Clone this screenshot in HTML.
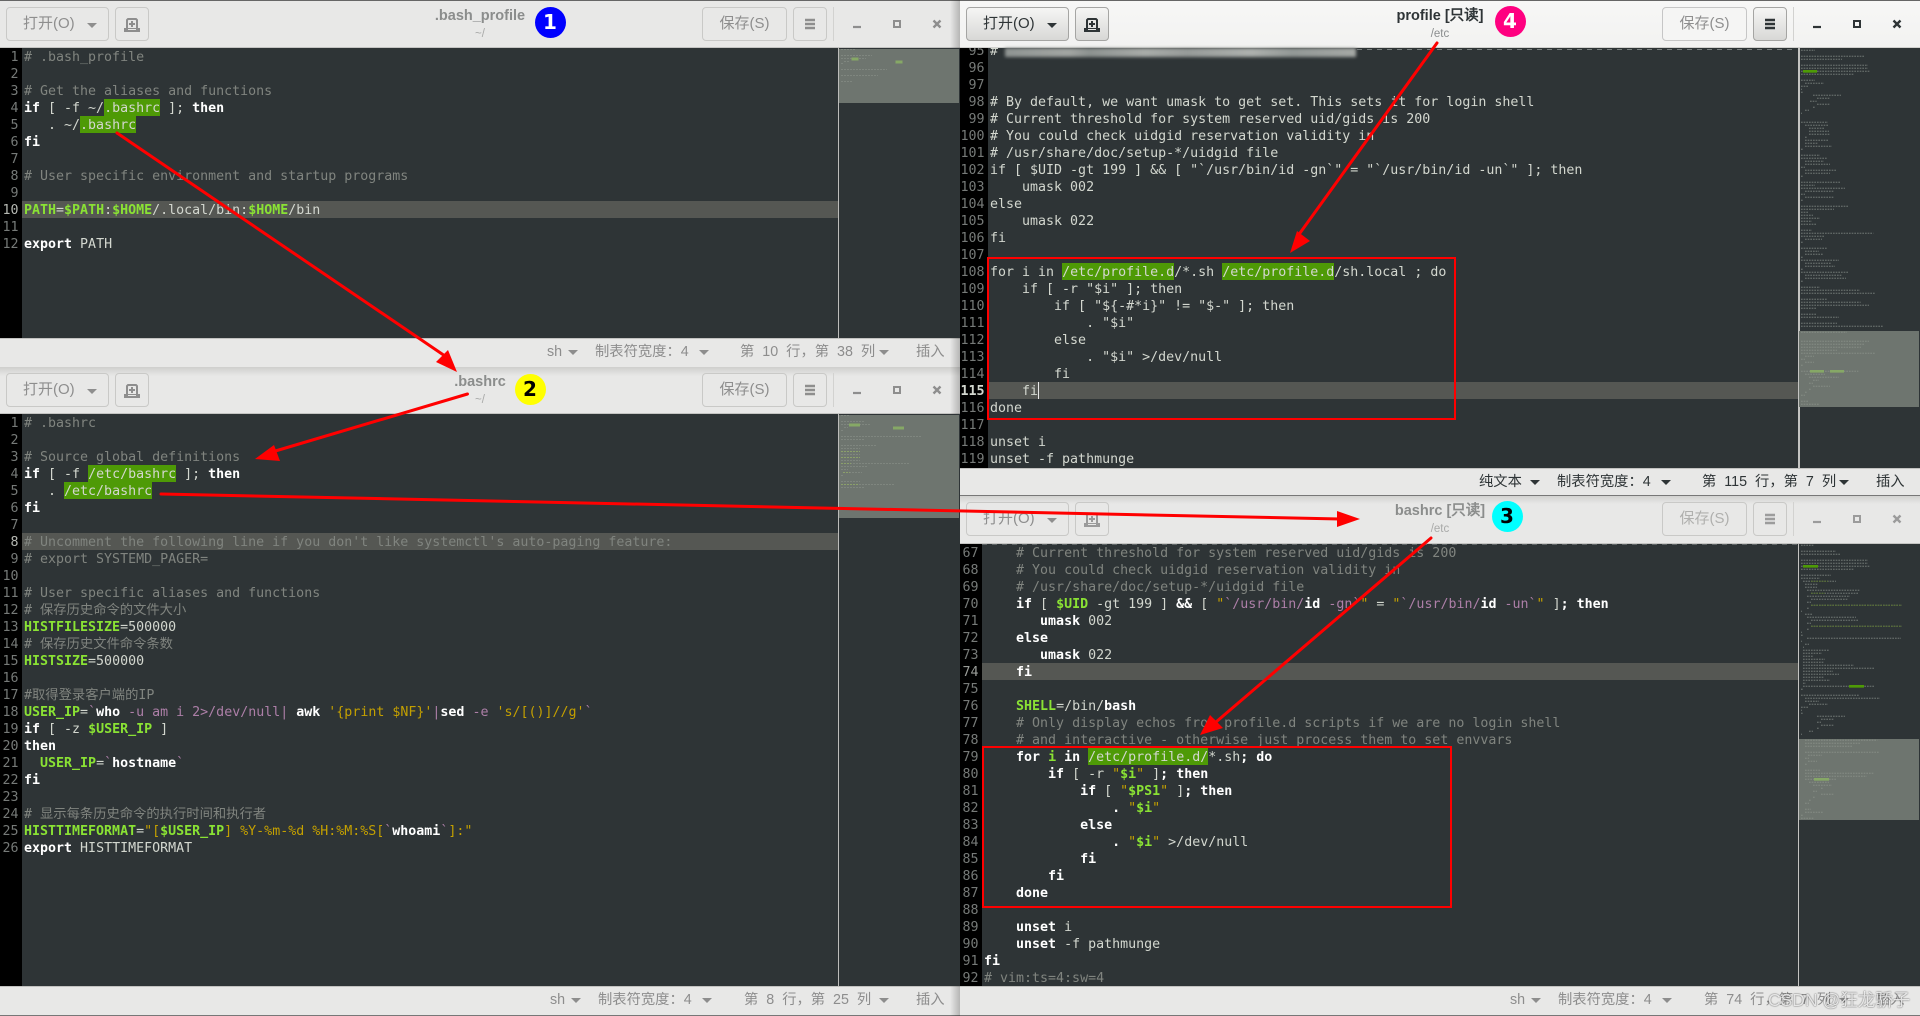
<!DOCTYPE html>
<html lang="zh"><head><meta charset="utf-8"><title>gedit</title>
<style>
html,body{margin:0;padding:0;width:1920px;height:1016px;overflow:hidden;background:#2e3436}
div,span,pre,svg{box-sizing:border-box}
.a{position:absolute}
.hd{position:absolute;background:#e8e8e7;border-bottom:1px solid #c4c4c2}
.hd.on{background:linear-gradient(#f7f7f6,#f2f2f1);border-bottom:1px solid #d0d0ce}
.st{position:absolute;background:#e8e8e7;border-top:1px solid #c2c2c0;border-bottom:1px solid #777}
.ed{position:absolute;background:#2e3436;overflow:hidden}
.gt{position:absolute;background:#000;top:0;bottom:0;left:0}
pre{position:absolute;margin:0;font:13.3px/17px "DejaVu Sans Mono","WenQuanYi Zen Hei",monospace;color:#d3d7cf;white-space:pre}
pre.n{color:#767a78;text-align:right;left:0}
.cur{position:absolute;background:#555753;height:17px}
.k{font-weight:bold;color:#fff}.g{font-weight:bold;color:#8ae234}.c{color:#80847f}.y{color:#c4a000}.p{color:#ad7fa8}
.h{display:inline-block;height:17px;padding-top:1px;margin-top:-1px;vertical-align:top;background:#4e9a06;color:#d3d7cf}
.btn{position:absolute;border:1px solid #c9c9c7;border-radius:4px;height:34px;background:#e8e8e7;color:#8e8e8e;font:15px/32px "WenQuanYi Zen Hei","Liberation Sans",sans-serif;white-space:nowrap}
.btn.on{background:linear-gradient(#f5f5f4,#d8d8d6);border-color:#a5a5a3;color:#2e3436}
.btn.off{background:#f5f5f4;border-color:#c6c6c6;color:#8f8f8f}
.tx{position:absolute;white-space:nowrap}
.tt{position:absolute;text-align:center;white-space:nowrap;font:bold 14.5px/18px "Liberation Sans","WenQuanYi Zen Hei",sans-serif;color:#8b8d8c}
.su{position:absolute;text-align:center;white-space:nowrap;font:11.5px/14px "Liberation Sans",sans-serif;color:#a9aaa9}
.s{position:absolute;white-space:nowrap;font:14.3px/18px "WenQuanYi Zen Hei","Liberation Sans",sans-serif;color:#8d8d8d}
.s.on{color:#2e3436}
.w{word-spacing:4px}
.ar{position:absolute;width:0;height:0;border-left:5px solid transparent;border-right:5px solid transparent;border-top:5px solid #8d8d8d}
.ar.on{border-top-color:#2e3436}
.bd{position:absolute;width:31px;height:31px;border-radius:50%;text-align:center;font:bold 20px/31px "DejaVu Sans",sans-serif}
.sep{position:absolute;width:1px;height:34px;background:#d2d2d0}
</style></head><body>

<!-- window 1 -->
<div class="hd a" style="left:0;top:0;width:960px;height:48px;border-top:1px solid #666"></div>
<div class="ed" style="left:0;top:48px;width:838px;height:290px">
<div class="gt" style="width:22px"></div>
<div class="cur" style="left:22px;top:153px;width:816px"></div>
<pre class="n" style="top:1px;width:18.5px;">1
2
3
4
5
6
7
8
9
<span style="color:#b5b8b2">10</span>
11
12</pre>
<pre style="left:24px;top:1px"><span class="c"># .bash_profile</span>

<span class="c"># Get the aliases and functions</span>
<span class="k">if</span> [ -f ~/<span class="h">.bashrc</span> ]; <span class="k">then</span>
   . ~/<span class="h">.bashrc</span>
<span class="k">fi</span>

<span class="c"># User specific environment and startup programs</span>

<span class="g">PATH</span>=<span class="g">$PATH</span>:<span class="g">$HOME</span>/.local/bin:<span class="g">$HOME</span>/bin

<span class="k">export</span> PATH</pre>
</div>
<div class="a" style="left:838px;top:48px;width:122px;height:290px;background:#2e3436;border-left:1px solid #bcbcba"></div>
<div class="st" style="left:0;top:338px;width:960px;height:30px"></div>
<div class="btn" style="left:6px;top:7px;width:103px"><span class="tx" style="left:16px;top:0">打开(O)</span></div>
<div class="ar" style="left:87px;top:23px;border-top-color:#8e8e8e"></div>
<div class="btn" style="left:115px;top:7px;width:34px"></div>
<div class="btn" style="left:702px;top:7px;width:85px;text-align:center">保存(S)</div>
<div class="btn" style="left:793px;top:7px;width:34px"></div>
<div class="sep" style="left:833px;top:7px"></div>
<div class="tt" style="left:330px;width:300px;top:7px">.bash_profile</div>
<div class="su" style="left:430px;width:100px;top:27px">~/</div>
<span class="s" style="left:547px;top:343px">sh</span><span class="ar" style="left:568px;top:350px"></span>
<span class="s" style="left:595px;top:343px">制表符宽度：4</span><span class="ar" style="left:699px;top:350px"></span>
<span class="s w" style="left:740px;top:343px">第 10 行，第 38 列</span><span class="ar" style="left:879px;top:350px"></span>
<span class="s" style="left:916px;top:343px">插入</span>

<!-- window 2 -->
<div class="hd" style="left:0;top:367px;width:960px;height:47px;background:linear-gradient(#cfcfcd,#e8e8e7 9px)"></div>
<div class="ed" style="left:0;top:414px;width:838px;height:572px">
<div class="gt" style="width:22px"></div>
<div class="cur" style="left:22px;top:119px;width:816px"></div>
<pre class="n" style="top:1px;width:18.5px">1
2
3
4
5
6
7
<span style="color:#b5b8b2">8</span>
9
10
11
12
13
14
15
16
17
18
19
20
21
22
23
24
25
26</pre>
<pre style="left:24px;top:1px"><span class="c"># .bashrc</span>

<span class="c"># Source global definitions</span>
<span class="k">if</span> [ -f <span class="h">/etc/bashrc</span> ]; <span class="k">then</span>
   . <span class="h">/etc/bashrc</span>
<span class="k">fi</span>

<span class="c"># Uncomment the following line if you don't like systemctl's auto-paging feature:</span>
<span class="c"># export SYSTEMD_PAGER=</span>

<span class="c"># User specific aliases and functions</span>
<span class="c"># 保存历史命令的文件大小</span>
<span class="g">HISTFILESIZE</span>=500000
<span class="c"># 保存历史文件命令条数</span>
<span class="g">HISTSIZE</span>=500000

<span class="c">#取得登录客户端的IP</span>
<span class="g">USER_IP</span>=<span class="p">`</span><span class="k">who</span> <span class="p">-u am i 2&gt;/dev/null|</span> <span class="k">awk</span> <span class="y">'{print $NF}'</span><span class="p">|</span><span class="k">sed</span> <span class="p">-e</span> <span class="y">'s/[()]//g'</span><span class="p">`</span>
<span class="k">if</span> [ -z <span class="g">$USER_IP</span> ]
<span class="k">then</span>
  <span class="g">USER_IP</span>=<span class="p">`</span><span class="k">hostname</span><span class="p">`</span>
<span class="k">fi</span>

<span class="c"># 显示每条历史命令的执行时间和执行者</span>
<span class="g">HISTTIMEFORMAT</span>=<span class="y">"[</span><span class="g">$USER_IP</span><span class="y">] %Y-%m-%d %H:%M:%S[</span><span class="p">`</span><span class="k">whoami</span><span class="p">`</span><span class="y">]:"</span>
<span class="k">export</span> HISTTIMEFORMAT</pre>
</div>
<div class="a" style="left:838px;top:414px;width:122px;height:572px;background:#2e3436;border-left:1px solid #bcbcba"></div>
<div class="st" style="left:0;top:986px;width:960px;height:30px"></div>
<div class="btn" style="left:6px;top:373px;width:103px"><span class="tx" style="left:16px;top:0">打开(O)</span></div>
<div class="ar" style="left:87px;top:389px;border-top-color:#8e8e8e"></div>
<div class="btn" style="left:115px;top:373px;width:34px"></div>
<div class="btn" style="left:702px;top:373px;width:85px;text-align:center">保存(S)</div>
<div class="btn" style="left:793px;top:373px;width:34px"></div>
<div class="sep" style="left:833px;top:373px"></div>
<div class="tt" style="left:330px;width:300px;top:373px">.bashrc</div>
<div class="su" style="left:430px;width:100px;top:393px">~/</div>
<span class="s" style="left:550px;top:991px">sh</span><span class="ar" style="left:571px;top:998px"></span>
<span class="s" style="left:598px;top:991px">制表符宽度：4</span><span class="ar" style="left:702px;top:998px"></span>
<span class="s w" style="left:744px;top:991px">第 8 行，第 25 列</span><span class="ar" style="left:879px;top:998px"></span>
<span class="s" style="left:916px;top:991px">插入</span>

<!-- right-edge shadow of left windows -->
<div class="a" style="left:950px;top:0;width:10px;height:48px;background:linear-gradient(90deg,rgba(0,0,0,0),rgba(0,0,0,.22))"></div>
<div class="a" style="left:950px;top:338px;width:10px;height:76px;background:linear-gradient(90deg,rgba(0,0,0,0),rgba(0,0,0,.22))"></div>
<div class="a" style="left:950px;top:986px;width:10px;height:30px;background:linear-gradient(90deg,rgba(0,0,0,0),rgba(0,0,0,.22))"></div>

<!-- window 4 -->
<div class="hd on" style="left:960px;top:0;width:960px;height:48px;border-top:1px solid #666"></div>
<div class="ed" style="left:960px;top:48px;width:838px;height:420px">
<div class="gt" style="width:28px"></div>
<div class="cur" style="left:28px;top:334px;width:810px"></div>
<pre class="n" style="top:-5px;width:24.5px">95
96
97
98
99
100
101
102
103
104
105
106
107
108
109
110
111
112
113
114
<span style="color:#d3d7cf;font-weight:bold">115</span>
116
117
118
119</pre>
<pre style="left:30px;top:-5px"># 


# By default, we want umask to get set. This sets it for login shell
# Current threshold for system reserved uid/gids is 200
# You could check uidgid reservation validity in
# /usr/share/doc/setup-*/uidgid file
if [ $UID -gt 199 ] &amp;&amp; [ "`/usr/bin/id -gn`" = "`/usr/bin/id -un`" ]; then
    umask 002
else
    umask 022
fi

for i in <span class="h">/etc/profile.d</span>/*.sh <span class="h">/etc/profile.d</span>/sh.local ; do
    if [ -r "$i" ]; then
        if [ "${-#*i}" != "$-" ]; then
            . "$i"
        else
            . "$i" &gt;/dev/null
        fi
    fi
done

unset i
unset -f pathmunge</pre>
<div class="a" style="left:78px;top:334px;width:1px;height:17px;background:#e8e8e8"></div>
</div>
<div class="a" style="left:1798px;top:48px;width:122px;height:420px;background:#2e3436;border-left:2px solid #c4c4c2"></div>
<div class="st" style="left:960px;top:468px;width:960px;height:28px"></div>
<div class="btn on" style="left:966px;top:7px;width:103px"><span class="tx" style="left:16px;top:0">打开(O)</span></div>
<div class="ar on" style="left:1047px;top:23px"></div>
<div class="btn on" style="left:1075px;top:7px;width:34px"></div>
<div class="btn off" style="left:1662px;top:7px;width:85px;text-align:center">保存(S)</div>
<div class="btn on" style="left:1753px;top:7px;width:34px"></div>
<div class="sep" style="left:1793px;top:7px"></div>
<div class="tt" style="left:1290px;width:300px;top:7px;color:#2e3436">profile [只读]</div>
<div class="su" style="left:1390px;width:100px;top:27px;color:#8a8d8e">/etc</div>
<span class="s on" style="left:1479px;top:473px">纯文本</span><span class="ar on" style="left:1530px;top:480px"></span>
<span class="s on" style="left:1557px;top:473px">制表符宽度：4</span><span class="ar on" style="left:1661px;top:480px"></span>
<span class="s on w" style="left:1702px;top:473px">第 115 行，第 7 列</span><span class="ar on" style="left:1839px;top:480px"></span>
<span class="s on" style="left:1876px;top:473px">插入</span>
<div class="a" style="left:1005px;top:48px;width:351px;height:9px;filter:blur(1.5px);background:linear-gradient(90deg,#8f9492 0,#a3a6a3 18%,#8d9290 24%,#a9aca9 40%,#979b99 52%,#aeb1ae 70%,#939896 82%,#a6a9a6 100%)"></div>

<!-- window 3 -->
<div class="hd" style="left:960px;top:496px;width:960px;height:48px;background:linear-gradient(#d2d2d0,#e8e8e7 8px)"></div>
<div class="ed" style="left:960px;top:544px;width:838px;height:442px">
<div class="gt" style="width:22px"></div>
<div class="cur" style="left:22px;top:119px;width:816px"></div>
<pre class="n" style="top:1px;width:18.5px">67
68
69
70
71
72
73
<span style="color:#999c98">74</span>
75
76
77
78
79
80
81
82
83
84
85
86
87
88
89
90
91
92</pre>
<pre style="left:24px;top:1px">    <span class="c"># Current threshold for system reserved uid/gids is 200</span>
    <span class="c"># You could check uidgid reservation validity in</span>
    <span class="c"># /usr/share/doc/setup-*/uidgid file</span>
    <span class="k">if</span> [ <span class="g">$UID</span> -gt 199 ] <span class="k">&amp;&amp;</span> [ <span class="y">"</span><span class="p">`/usr/bin/</span><span class="k">id</span> <span class="p">-gn`</span><span class="y">"</span> = <span class="y">"</span><span class="p">`/usr/bin/</span><span class="k">id</span> <span class="p">-un`</span><span class="y">"</span> ]<span class="k">;</span> <span class="k">then</span>
       <span class="k">umask</span> 002
    <span class="k">else</span>
       <span class="k">umask</span> 022
    <span class="k">fi</span>

    <span class="g">SHELL</span>=/bin/<span class="k">bash</span>
    <span class="c"># Only display echos from profile.d scripts if we are no login shell</span>
    <span class="c"># and interactive - otherwise just process them to set envvars</span>
    <span class="k">for</span> <span class="g">i</span> <span class="k">in</span> <span class="h">/etc/profile.d/</span>*.sh<span class="k">;</span> <span class="k">do</span>
        <span class="k">if</span> [ -r <span class="y">"</span><span class="g">$i</span><span class="y">"</span> ]<span class="k">;</span> <span class="k">then</span>
            <span class="k">if</span> [ <span class="y">"</span><span class="g">$PS1</span><span class="y">"</span> ]<span class="k">;</span> <span class="k">then</span>
                <span class="k">.</span> <span class="y">"</span><span class="g">$i</span><span class="y">"</span>
            <span class="k">else</span>
                <span class="k">.</span> <span class="y">"</span><span class="g">$i</span><span class="y">"</span> &gt;/dev/null
            <span class="k">fi</span>
        <span class="k">fi</span>
    <span class="k">done</span>

    <span class="k">unset</span> i
    <span class="k">unset</span> -f pathmunge
<span class="k">fi</span>
<span class="c"># vim:ts=4:sw=4</span></pre>
</div>
<div class="a" style="left:1798px;top:544px;width:122px;height:442px;background:#2e3436;border-left:1px solid #c4c4c2"></div>
<div class="st" style="left:960px;top:986px;width:960px;height:30px"></div>
<div class="btn" style="left:966px;top:502px;width:103px"><span class="tx" style="left:16px;top:0">打开(O)</span></div>
<div class="ar" style="left:1047px;top:518px;border-top-color:#8e8e8e"></div>
<div class="btn" style="left:1075px;top:502px;width:34px"></div>
<div class="btn" style="left:1662px;top:502px;width:85px;text-align:center;color:#b0b0ae">保存(S)</div>
<div class="btn" style="left:1753px;top:502px;width:34px"></div>
<div class="sep" style="left:1793px;top:502px"></div>
<div class="tt" style="left:1290px;width:300px;top:502px">bashrc [只读]</div>
<div class="su" style="left:1390px;width:100px;top:522px">/etc</div>
<span class="s" style="left:1510px;top:991px">sh</span><span class="ar" style="left:1531px;top:998px"></span>
<span class="s" style="left:1558px;top:991px">制表符宽度：4</span><span class="ar" style="left:1662px;top:998px"></span>
<span class="s w" style="left:1704px;top:991px">第 74 行，第 7 列</span><span class="ar" style="left:1839px;top:998px"></span>
<span class="s" style="left:1876px;top:991px">插入</span>
<span class="tx" style="left:1768px;top:989px;font:17.5px/22px 'Liberation Sans','WenQuanYi Zen Hei',sans-serif;color:rgba(255,255,255,.82);text-shadow:0 0 1.5px rgba(0,0,0,.75)">CSDN @狂龙骄子</span>

<!-- overlay: minimaps, icons, arrows -->
<svg class="a" style="left:0;top:0" width="1920" height="1016" viewBox="0 0 1920 1016" fill="none">
<!-- window icons -->
<g id="i1">
 <path d="M128 19h8l1 1v9h-10v-9z" stroke="#8e8e8e" stroke-width="2"/><path d="M132 21v6M129 24h6" stroke="#8e8e8e" stroke-width="2"/><path d="M124 28h16v4h-16z" fill="#8e8e8e"/><path d="M128 29.500h8" stroke="#e8e8e7"/>
 <path d="M805 20h10M805 24h10M805 28h10" stroke="#8e8e8e" stroke-width="2.400"/>
 <path d="M853 27h8" stroke="#8e8e8e" stroke-width="2.200"/><path d="M894 21h6v6h-6z" stroke="#8e8e8e" stroke-width="2"/><path d="M933.500 20.500l7 7M940.500 20.500l-7 7" stroke="#8e8e8e" stroke-width="2.400"/>
</g>
<use href="#i1" y="366"/>
<use href="#i1" x="960" y="495" opacity=".85"/>
<g transform="translate(960 0)">
 <path d="M128 19h8l1 1v9h-10v-9z" stroke="#2e3436" stroke-width="2"/><path d="M132 21v6M129 24h6" stroke="#2e3436" stroke-width="2"/><path d="M124 28h16v4h-16z" fill="#2e3436"/><path d="M128 29.500h8" stroke="#e8e8e7"/>
 <path d="M805 20h10M805 24h10M805 28h10" stroke="#2e3436" stroke-width="2.400"/>
 <path d="M853 27h8" stroke="#2e3436" stroke-width="2.200"/><path d="M894 21h6v6h-6z" stroke="#2e3436" stroke-width="2"/><path d="M933.500 20.500l7 7M940.500 20.500l-7 7" stroke="#2e3436" stroke-width="2.400"/>
</g>
<!-- dashed top lines -->
<path d="M1357 49.500H1795" stroke="#767c7c" stroke-width="1" stroke-dasharray="5 5"/>
<path d="M982 544.500H1797" stroke="#5f6566" stroke-width="1" stroke-dasharray="5 5"/>

<!-- minimap window 1 -->
<rect x="839" y="49" width="120" height="54" fill="#6e756f"/>
<path d="M841 49.500h14M841 55.500h31M841 58.500h25M844 61.500h5M841 63.500h2M841 69.500h46M841 75.500h37M841 81.500h11" stroke="#7f867f" stroke-dasharray="2 1"/>
<path d="M851.500 59h7M895.500 62h7" stroke="#86a866" stroke-width="3"/>
<!-- minimap window 2 -->
<rect x="839" y="415" width="120" height="103" fill="#6e756f"/>
<path d="M841 415.500h9M841 421.500h24M841 424.500h29M844 427.500h4M841 430.500h2M841 436.500h80M841 439.500h23M841 445.500h36M841 448.500h19M841 454.500h19M841 460.500h19M841 463.500h69M841 466.500h26M841 469.500h7M843 472.500h19M841 475.500h2M841 481.500h19M841 484.500h54M841 487.500h23" stroke="#7f867f" stroke-dasharray="2 1"/>
<path d="M841 451.500h19M841 457.500h19M841 463.500h10M841 484.500h18M843 472.500h7" stroke="#8ba06a" stroke-dasharray="2 1"/>
<path d="M849 425h11M893 428h11" stroke="#86a866" stroke-width="3"/>
<!-- minimap window 4 -->
<rect x="1799" y="331" width="120" height="76" fill="#6e756f"/>
<g transform="translate(1600 0) scale(.33333)" stroke="#5f6664" stroke-width="4" stroke-dasharray="5 3">
<path d="M603 151H645M603 169H792M603 178H726M603 196H804M603 205H804M603 214H810M603 223H762M603 241H645M615 250H672M603 259H624M603 268H606M603 277H609M639 286H723M651 295H690M630 304H650M651 313H690M639 322H645M615 331H627M603 340H606M603 367H684M615 376H684M627 385H675M627 394H687M627 403H690M615 412H621M615 421H685M615 430H654M615 439H696M603 448H609M603 466H660M603 475H681M615 484H672M615 493H690M603 502H615M615 511H708M615 520H690M603 529H609M603 547H720M603 556H645M603 565H735M615 574H702M603 583H615M615 592H702M603 601H609M603 619H747M603 628H702M603 637H624M603 646H639M603 655H660M603 664H636M603 673H648M603 691H636M603 700H820M603 709H675M615 718H666M603 727H609M603 745H681M615 754H657M615 763H669M603 772H609M603 781H717M615 790H693M615 799H705M603 808H609M603 817H747M615 826H726M615 835H738M603 844H609M603 862H660M603 871H780M603 880H825M603 898H680M603 907H782M603 916H807M603 925H651M603 943H648M603 952H717M603 970H711M603 979H850"/>
<path d="M609 214H651" stroke="#4e9a06" stroke-width="8" stroke-dasharray="none"/>
<path d="M603 997H741M603 1024H807M603 1033H795M603 1042H783M603 1051H711M603 1060H825M615 1069H642M603 1078H615M615 1087H642M603 1096H609M603 1114H775M615 1123H675M627 1132H717M639 1141H657M627 1150H639M639 1159H690M627 1168H633M615 1177H621M603 1186H615M603 1204H624M603 1213H657" stroke="#7f867f"/>
<path d="M630 1114H672M690 1114H732" stroke="#86a866" stroke-width="8" stroke-dasharray="none"/>
</g>
<!-- minimap window 3 -->
<rect x="1799" y="739" width="120" height="81" fill="#6e756f"/>
<g transform="translate(1700 520) scale(.33333)" stroke="#5f6664" stroke-width="4" stroke-dasharray="5 3">
<path d="M303 76H342M303 94H408M303 103H423M303 121H504M303 130H504M303 139H510M303 148H462M303 166H393M303 175H360M309 184H408M315 193H354M315 202H351M321 211H480M333 220H474M321 229H450M333 238H444M321 247H333M333 256H606M321 265H327M303 274H306M315 283H339M321 292H468M333 301H477M321 310H333M333 319H606M321 328H327M303 337H306M303 346H309M321 355H603M303 364H306M315 373H327M309 382H312M309 391H387M309 400H366M309 409H339M309 418H375M309 427H372M309 436H462M309 445H525M309 454H399M309 463H417M309 472H372M309 481H390M309 490H318M309 499H522M303 508H309M303 526H477M315 535H540M315 544H357M327 553H384M303 562H324M303 571H306M303 580H309M351 589H435M363 598H402M351 607H363M363 616H402M351 625H357M327 634H339M303 643H306"/>
<path d="M333 184H384M333 220H375M333 256H606M333 319H606" stroke="#566b38"/>
<path d="M309 139H354M447 499H492" stroke="#4e9a06" stroke-width="8" stroke-dasharray="none"/>
<path d="M315 661H532M315 670H480M315 679H459M315 697H537M324 706H366M315 715H327M324 724H351M315 733H321M315 751H360M315 760H520M315 769H500M315 778H411M327 787H387M339 796H396M363 805H369M339 814H351M363 823H402M339 832H345M327 841H333M315 850H327M315 868H333M315 877H369M303 886H309M303 895H340" stroke="#7f867f"/>
<path d="M342 778H387" stroke="#86a866" stroke-width="8" stroke-dasharray="none"/>
</g>

<!-- red boxes -->
<rect x="988" y="258" width="467" height="161" stroke="#f00" stroke-width="2"/>
<rect x="983" y="747" width="468" height="160" stroke="#f00" stroke-width="2"/>
<!-- arrows -->
<g stroke="#f00" stroke-width="3" stroke-linecap="round">
<path d="M117 133L445 356"/>
<path d="M467.500 394L272 452"/>
<path d="M161 494L1340 519"/>
<path d="M1437 43L1300 233"/>
<path d="M1431 538L1216 722"/>
</g>
<g fill="#f00">
<path d="M457 372L436 362L448 350z"/>
<path d="M255 459L274 445L280 461z"/>
<path d="M1360 519L1337 511L1337 527z"/>
<path d="M1290 253L1297 231L1310 241z"/>
<path d="M1200 735L1210 715L1223 728z"/>
</g>
</svg>

<!-- badges -->
<div class="bd" style="left:534.500px;top:6.500px;background:#0000ff;color:#fff">1</div>
<div class="bd" style="left:514.500px;top:373.500px;background:#ffff00;color:#000">2</div>
<div class="bd" style="left:1491.500px;top:500.500px;background:#00ffff;color:#000">3</div>
<div class="bd" style="left:1494.500px;top:5.500px;background:#ff0080;color:#fff">4</div>
</body></html>
